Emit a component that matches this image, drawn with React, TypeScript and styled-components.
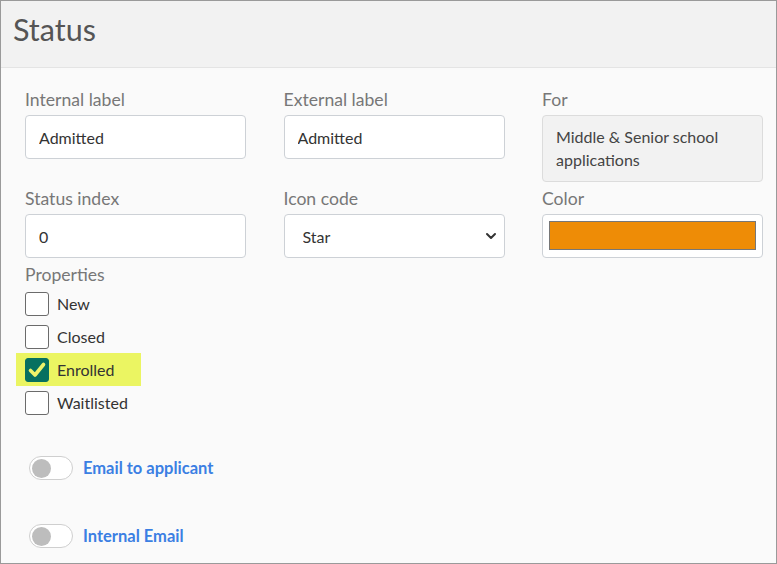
import React from 'react'
import styled, { createGlobalStyle } from 'styled-components'
import { ChevronDown } from 'lucide-react'

const GlobalStyle = createGlobalStyle`
    html, body {
        margin: 0;
        padding: 0;
        background: #fafafa;
    }
    body {
        font-family: Lato, "Open Sans", Arial, sans-serif;
    }
    * {
        box-sizing: border-box;
    }
`

const Panel = styled.div`
    width: 777px;
    height: 564px;
    border: 1px solid #9a9a9a;
    background: #fafafa;
    overflow: hidden;
`

const Header = styled.div`
    height: 67px;
    background: #f2f2f2;
    border-bottom: 1px solid #e4e4e4;
    padding: 9px 12px 0;
`

const Title = styled.h1`
    margin: 0;
    font-size: 30.5px;
    font-weight: 400;
    color: #555;
    line-height: 38px;
`

const Body = styled.div`
    padding: 21px 14px 0 24px;
`

const FieldGrid = styled.div`
    display: grid;
    grid-template-columns: 221px 221px 221px;
    column-gap: 37.5px;
    row-gap: 6px;
    align-items: start;
`

const Field = styled.div`
    display: flex;
    flex-direction: column;
`

const Label = styled.label`
    font-size: 17.6px;
    line-height: 22px;
    color: #777;
    margin-bottom: 4px;
`

const SectionLabel = styled(Label)`
    margin-bottom: 1px;
`

const TextInput = styled.input`
    height: 44px;
    width: 100%;
    border: 1px solid #cdd1d6;
    border-radius: 4px;
    background: #fff;
    padding: 0 13px;
    font-family: inherit;
    font-size: 16px;
    color: #333;
    outline: none;
`

const ReadOnlyBox = styled.div`
    border: 1px solid #dcdcdc;
    border-radius: 4px;
    background: #f2f2f2;
    padding: 9px 13px 10px;
    font-size: 16px;
    line-height: 23px;
    color: #444;
`

const SelectWrap = styled.div`
    position: relative;
`

const Select = styled.select`
    appearance: none;
    width: 100%;
    height: 44px;
    border: 1px solid #cdd1d6;
    border-radius: 4px;
    background: #fff;
    padding: 0 18px;
    font-family: inherit;
    font-size: 16px;
    color: #333;
    outline: none;
`

const Chevron = styled(ChevronDown)`
    position: absolute;
    right: 6px;
    top: 14px;
    pointer-events: none;
`

const ColorBox = styled.div`
    height: 44px;
    border: 1px solid #cdd1d6;
    border-radius: 4px;
    background: #fff;
    padding: 6px 6px 7px;
`

const Swatch = styled.div<{ $color: string }>`
    height: 100%;
    background: ${p => p.$color};
    border: 1px solid #777;
`

const Section = styled.div`
    margin-top: 6px;
    display: flex;
    flex-direction: column;
`

const CheckRow = styled.label<{ $highlight?: boolean }>`
    display: flex;
    align-items: center;
    gap: 8px;
    height: 33px;
    margin-left: -9px;
    padding-left: 9px;
    width: 125px;
    background: ${p => (p.$highlight ? '#ebf562' : 'transparent')};
    font-size: 16px;
    color: #333;
`

const Box = styled.span<{ $checked?: boolean }>`
    width: 24px;
    height: 24px;
    border-radius: 3px;
    border: 1.5px solid ${p => (p.$checked ? '#077060' : '#6b6b6b')};
    background: ${p => (p.$checked ? '#077060' : '#fff')};
    display: flex;
    align-items: center;
    justify-content: center;
    flex-shrink: 0;
`

const Toggles = styled.div`
    margin-top: 37px;
    padding-left: 4px;
    display: flex;
    flex-direction: column;
    gap: 44px;
`

const ToggleRow = styled.div`
    display: flex;
    align-items: center;
    gap: 10px;
`

const Track = styled.span`
    width: 44px;
    height: 24px;
    border-radius: 12px;
    border: 1px solid #cfcfcf;
    background: #fff;
    padding: 2px;
    display: flex;
    align-items: center;
`

const Knob = styled.span`
    width: 19px;
    height: 19px;
    border-radius: 50%;
    background: #bdbdbd;
`

const ToggleLabel = styled.span`
    font-size: 16.5px;
    font-weight: 700;
    color: #3b7fe3;
`

const properties = [
    { name: 'New', checked: false },
    { name: 'Closed', checked: false },
    { name: 'Enrolled', checked: true },
    { name: 'Waitlisted', checked: false },
]

const App = () => {
    return <>
        <GlobalStyle />
        <Panel>
            <Header>
                <Title>Status</Title>
            </Header>
            <Body>
                <FieldGrid>
                    <Field>
                        <Label>Internal label</Label>
                        <TextInput defaultValue='Admitted' />
                    </Field>
                    <Field>
                        <Label>External label</Label>
                        <TextInput defaultValue='Admitted' />
                    </Field>
                    <Field>
                        <Label>For</Label>
                        <ReadOnlyBox>Middle &amp; Senior school applications</ReadOnlyBox>
                    </Field>
                    <Field>
                        <Label>Status index</Label>
                        <TextInput defaultValue='0' />
                    </Field>
                    <Field>
                        <Label>Icon code</Label>
                        <SelectWrap>
                            <Select defaultValue='star'>
                                <option value='star'>Star</option>
                            </Select>
                            <Chevron size={16} strokeWidth={3} color='#333' />
                        </SelectWrap>
                    </Field>
                    <Field>
                        <Label>Color</Label>
                        <ColorBox>
                            <Swatch $color='#ee8c06' />
                        </ColorBox>
                    </Field>
                </FieldGrid>
                <Section>
                    <SectionLabel>Properties</SectionLabel>
                    {properties.map(p => (
                        <CheckRow key={p.name} $highlight={p.checked}>
                            <Box $checked={p.checked}>
                                {p.checked && (
                                    <svg width='20' height='20' viewBox='0 0 20 20'>
                                        <path d='M3.5 10.5 L8 15 L16.5 4.5' fill='none' stroke='#eef36a' strokeWidth='3.6' strokeLinecap='round' strokeLinejoin='round' />
                                    </svg>
                                )}
                            </Box>
                            {p.name}
                        </CheckRow>
                    ))}
                </Section>
                <Toggles>
                    <ToggleRow>
                        <Track><Knob /></Track>
                        <ToggleLabel>Email to applicant</ToggleLabel>
                    </ToggleRow>
                    <ToggleRow>
                        <Track><Knob /></Track>
                        <ToggleLabel>Internal Email</ToggleLabel>
                    </ToggleRow>
                </Toggles>
            </Body>
        </Panel>
    </>
}

export default App
